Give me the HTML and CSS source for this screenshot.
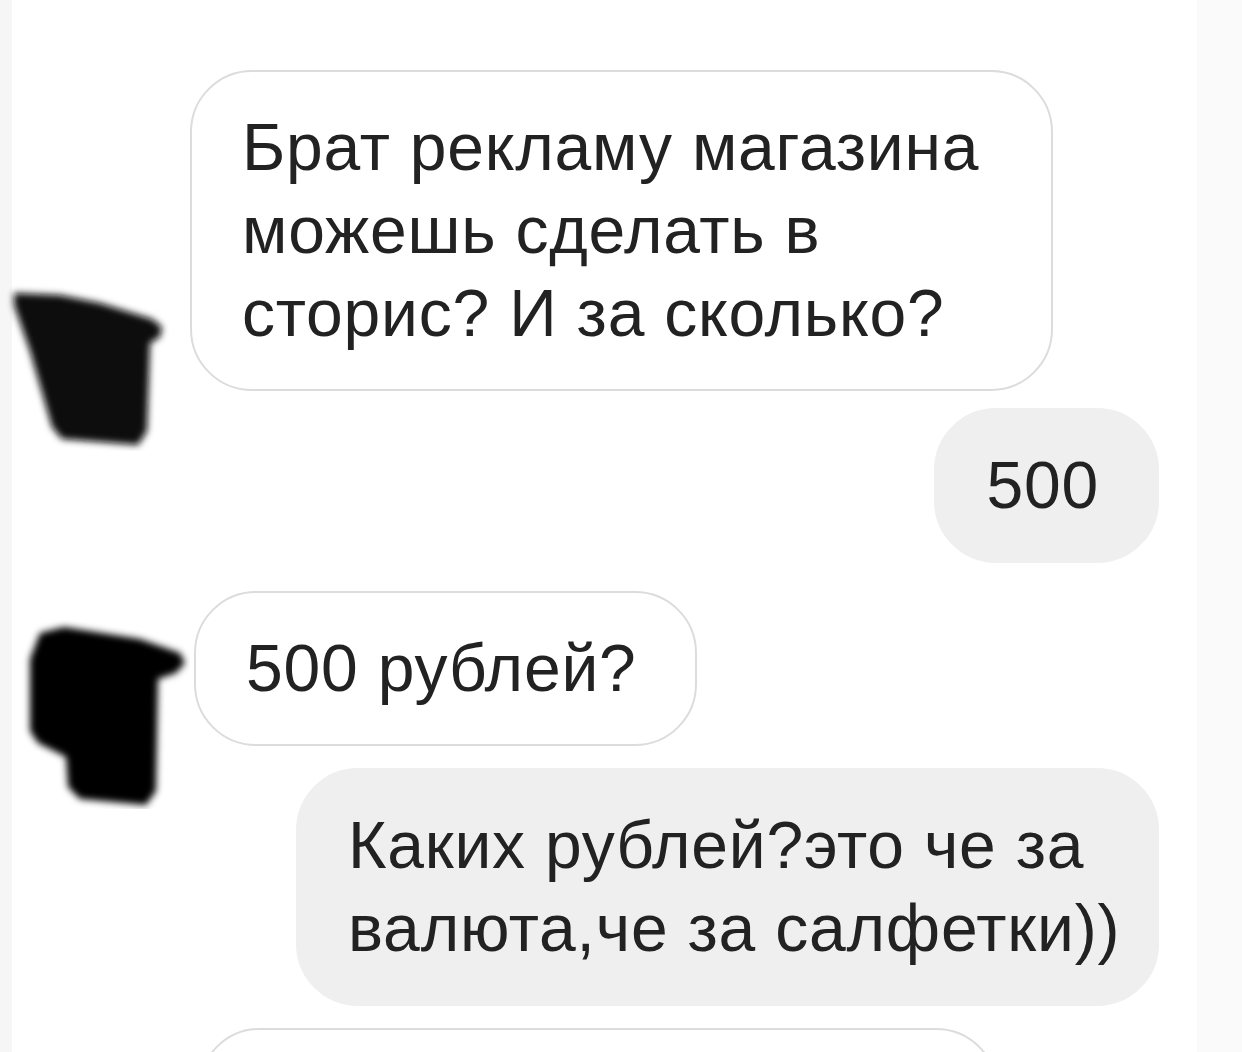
FILE: index.html
```html
<!DOCTYPE html>
<html lang="ru">
<head>
    <meta charset="UTF-8">
    <meta name="viewport" content="width=device-width, initial-scale=1.0">
    <title>Переписка</title>
    <link rel="stylesheet" href="styles.css">
</head>
<body>
    <div class="page">
        <div class="chat">
            <!-- Incoming message with hidden avatar -->
            <div class="row row-first">
                <div class="avatar">
                    <svg width="190" height="170" viewBox="0 0 190 170">
                        <defs>
                            <filter id="blur1" x="-20%" y="-20%" width="140%" height="140%">
                                <feGaussianBlur stdDeviation="3.5"/>
                            </filter>
                        </defs>
                        <path filter="url(#blur1)" fill="#080808" d="M14 12 L60 14 L100 22 L152 38 L162 46 L160 56 L150 62 L147 150 L138 164 L62 158 L52 146 L30 70 L14 24 Z"/>
                    </svg>
                </div>
                <div class="bubble outline bubble-wide">Брат рекламу магазина можешь сделать в сторис? И за сколько?</div>
            </div>

            <div class="row row-mine gap-s">
                <div class="bubble filled">500</div>
            </div>

            <div class="row gap-l">
                <div class="avatar avatar-low">
                    <svg width="190" height="190" viewBox="0 0 190 190">
                        <defs>
                            <filter id="blur2" x="-20%" y="-20%" width="140%" height="140%">
                                <feGaussianBlur stdDeviation="3.5"/>
                            </filter>
                        </defs>
                        <path filter="url(#blur2)" fill="#000" d="M40 14 L64 8 L140 20 L180 34 L185 44 L176 54 L158 60 L156 172 L146 186 L80 180 L68 168 L66 138 L38 124 L30 112 L30 40 Z"/>
                    </svg>
                </div>
                <div class="bubble outline shift">500 рублей?</div>
            </div>

            <div class="row row-mine gap-m">
                <div class="bubble filled bubble-reply">Каких рублей?это че за валюта,че за салфетки))</div>
            </div>

            <div class="row gap-m">
                <div class="avatar"></div>
                <div class="bubble outline bubble-next"></div>
            </div>
        </div>
        <div class="edge"></div>
    </div>
</body>
</html>
```

FILE: styles.css
```css
* {
    margin: 0;
    padding: 0;
    box-sizing: border-box;
}

html, body {
    height: 100%;
    overflow: hidden;
    background-color: #ffffff;
    font-family: "Liberation Sans", Arial, sans-serif;
    color: #222222;
}

.page {
    display: flex;
    height: 100%;
}

.chat {
    width: 1197px;
    padding-top: 70px;
    padding-right: 38px;
    display: flex;
    flex-direction: column;
    background: linear-gradient(to right, #f6f6f6 12px, #ffffff 12px);
}

.edge {
    flex: 1;
    background-color: #fafafa;
}

.row {
    display: flex;
    align-items: flex-end;
}

.row-mine {
    justify-content: flex-end;
}

.gap-s {
    margin-top: 17px;
}

.gap-m {
    margin-top: 22px;
}

.gap-l {
    margin-top: 28px;
}

.avatar {
    width: 190px;
    flex-shrink: 0;
    margin-bottom: -60px;
}

.avatar svg {
    display: block;
}

.avatar-low {
    margin-bottom: -63px;
}

.bubble {
    font-size: 66px;
    letter-spacing: 0.8px;
    line-height: 83px;
    padding: 34px 58px 34px 50px;
    border-radius: 62px;
}

.outline {
    border: 2px solid #dcdcdc;
    background-color: #ffffff;
}

.filled {
    border: 2px solid #efefef;
    background-color: #efefef;
}

.bubble-wide {
    width: 863px;
}

.bubble-reply {
    width: 863px;
    padding-right: 36px;
}

.shift {
    margin-left: 4px;
}

.bubble-next {
    width: 800px;
    height: 200px;
    margin-left: 8px;
}
```
